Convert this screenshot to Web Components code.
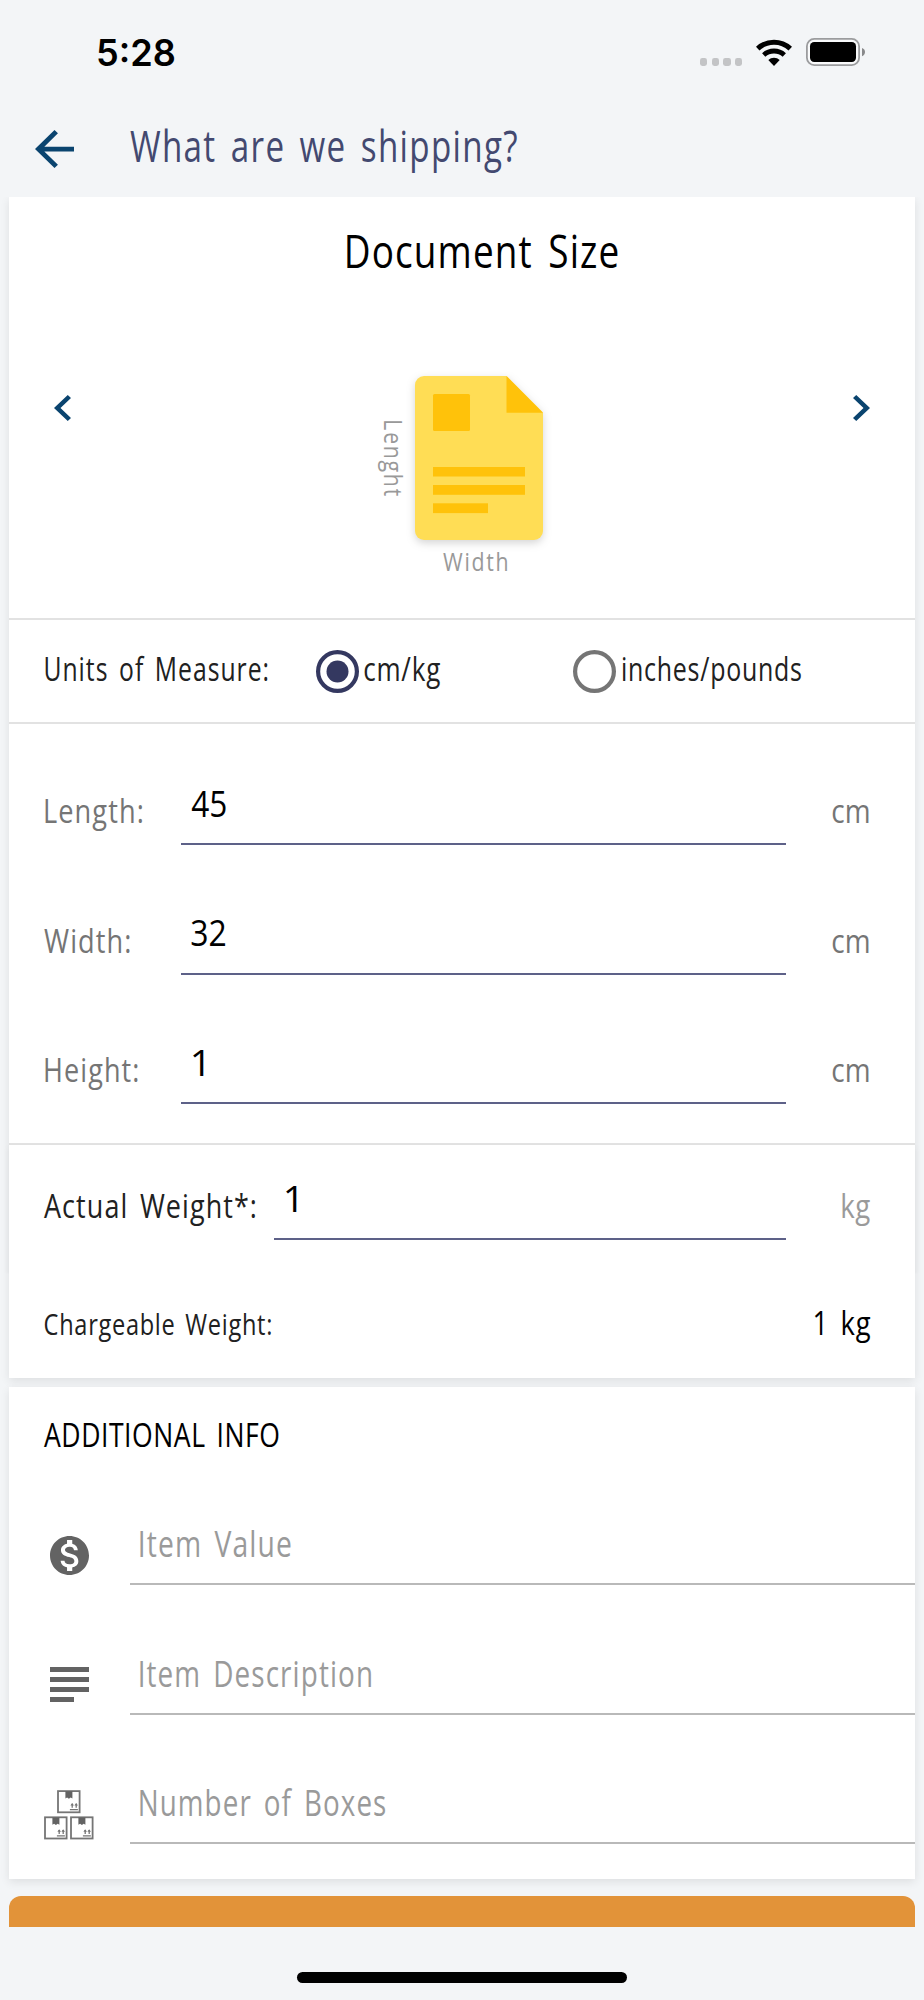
<!DOCTYPE html>
<html lang="en">
<head>
<meta charset="utf-8">
<title>What are we shipping?</title>
<style>
html,body{margin:0;padding:0;background:#f3f5f7}
body{width:924px;height:2000px;overflow:hidden;font-family:"Open Sans","Noto Sans",sans-serif;color:#000}
</style>
</head>
<body>
<shipping-screen></shipping-screen>
<script>
const define = (name, css, html, init) => customElements.define(name, class extends HTMLElement {
  connectedCallback() {
    if (this.shadowRoot) return;
    const root = this.attachShadow({ mode: 'open' });
    const a = n => this.getAttribute(n) || '';
    root.innerHTML = `<style>*{box-sizing:border-box}svg{display:block}${css}</style>` + (typeof html === 'function' ? html(a) : html);
    if (init) init(this, root, a);
  }
});

/* Condensed label: its box spans cap height by inked width. */
const ctx = document.createElement('canvas').getContext('2d');
define('fit-text',
  `:host{display:block;flex:none;height:.714em;line-height:.714em;white-space:pre}
   span{display:block;width:max-content;transform-origin:0 50%}`,
  '<span></span>',
  (el, root, a) => {
    const span = root.querySelector('span'), size = +a('size'), w = +a('w'), text = a('text');
    const face = a('face') || '"Open Sans","Noto Sans",sans-serif', weight = a('weight') || '400';
    const ls = (a('ls') === '' ? 0.03 : +a('ls')) * size, ws = 0.13 * size;
    span.textContent = text;
    el.style.fontSize = size + 'px';
    el.style.width = w + 'px';
    el.style.fontFamily = face;
    el.style.fontWeight = weight;
    if (a('color')) el.style.color = a('color');
    span.style.letterSpacing = ls + 'px';
    span.style.wordSpacing = ws + 'px';
    ctx.font = `${weight} ${size}px ${face}`;
    const m = ctx.measureText(text);
    const ink = m.actualBoundingBoxRight + m.actualBoundingBoxLeft + ls * (text.length - 1) + ws * (text.split(' ').length - 1);
    const s = w / ink;
    span.style.transform = `translate(${m.actualBoundingBoxLeft * s + +a('dx')}px,calc(-.031em + ${+(a('dy') || 1)}px)) scaleX(${s})`;
  });

define('status-bar',
  `:host{display:flex;height:104px;padding:38px 59px 0 97.5px;align-items:flex-start}
   fit-text{margin-top:2px}.dots{display:flex;gap:4.4px;margin:20px 0 0 auto}
   .dots i{width:7.3px;height:7.6px;border-radius:2.4px;background:#c3c4c6}
   .wifi{margin:1px 14px 0 13.8px}`,
  `<fit-text text="5:28" size="36.5" w="76.5" weight="600" ls="0" face="Inter,sans-serif"></fit-text>
   <div class="dots"><i></i><i></i><i></i><i></i></div>
   <svg class="wifi" width="36" height="27" viewBox="0 0 36 27"><g fill="none" stroke="#000"><path stroke-width="5.2" d="M1.7 9.6A24.1 24.1 0 0 1 34.3 9.6"/><path stroke-width="4.9" d="M7.7 16A15.4 15.4 0 0 1 28.3 16"/></g><path d="M12.3 20.9A8.6 8.6 0 0 1 23.7 20.9L18 27Z"/></svg>
   <svg width="59" height="28" viewBox="0 0 59 28"><rect x=".9" y=".9" width="52.2" height="26.2" rx="7.4" fill="#fff" fill-opacity=".5" stroke="#9b9c9e" stroke-width="1.8"/><rect x="4" y="4" width="46" height="20" rx="4.2"/><path fill="#88898b" d="M56 10c4 1.2 4 7 0 8.2z"/></svg>`);

define('nav-bar',
  `:host{display:flex;height:93px;padding:26px 0 0 35px}
   fit-text{margin-left:56px;margin-top:-.5px}`,
  `<svg width="39" height="38" viewBox="4 4 16 16" preserveAspectRatio="none"><path fill="#0a446f" d="M20 11H7.83l5.59-5.59L12 4l-8 8 8 8 1.41-1.41L7.83 13H20v-2z"/></svg>
   <fit-text text="What are we shipping?" size="43.4" w="387" color="#434970" ls=".04"></fit-text>`);

define('ui-card',
  `:host{display:block;margin:0 9px;background:#fff;box-shadow:0 3px 9px rgba(0,0,0,.09)}`, '<slot></slot>');

define('package-picker',
  `:host{display:flex;flex-direction:column;align-items:center;height:423px;padding-top:37px;border-bottom:2px solid #e2e2e2}
   .title{margin-left:40px}
   .row{align-self:stretch;display:flex;padding:110px 45px 0 45px}
   .chev{margin-top:19px}.pic{display:grid;grid-template-columns:18.5px 128px;column-gap:12.5px;margin-left:313px;margin-right:auto}
   .v{width:18.5px;height:75px;margin-top:45px}
   .v fit-text{transform-origin:0 0;transform:translateX(19.4px) rotate(90deg)}
   .doc{overflow:visible;filter:drop-shadow(0 3px 4px rgba(0,0,0,.17))}
   .h{grid-column:2;margin:12px 0 0 27.5px}`,
  `<fit-text class="title" text="Document Size" size="45.5" w="271" ls=".03"></fit-text>
   <div class="row">
    <svg class="chev" width="17" height="26" viewBox="8 6 7.41 12" preserveAspectRatio="none"><path fill="#0a446f" d="M15.41 7.41L14 6l-6 6 6 6 1.41-1.41L10.83 12z"/></svg>
    <div class="pic"><div class="v"><fit-text text="Lenght" size="26" w="75" color="#999" ls=".08"></fit-text></div>
     <svg class="doc" width="128" height="164" viewBox="0 0 128 164"><path fill="#ffdd55" d="M9 0H91.5L128 36.500V155a9 9 0 0 1-9 9H9a9 9 0 0 1-9-9V9a9 9 0 0 1 9-9z"/><g fill="#ffc20a"><path d="M91.500 0 128 36.700H91.500z"/><rect x="18" y="18" width="37" height="37" rx="1.500"/><rect x="18" y="91" width="92" height="9.500"/><rect x="18" y="109" width="92" height="9.800"/><rect x="18" y="127.300" width="55" height="9.800"/></g></svg>
     <fit-text class="h" text="Width" size="26" w="64" color="#999" ls=".08"></fit-text></div>
    <svg class="chev" width="17" height="26" viewBox="8.59 6 7.41 12" preserveAspectRatio="none"><path fill="#0a446f" d="M8.590 16.590L13.170 12 8.590 7.410 10 6l6 6-6 6z"/></svg>
   </div>`);

define('radio-option', `:host{display:flex;align-items:flex-start}fit-text{margin:7.500px 0 0 5.500px}`,
  a => { const on = a('checked') === 'true', c = on ? '#343860' : '#757575';
    return `<svg width="43" height="43" viewBox="0 0 43 43"><circle cx="21.500" cy="21.500" r="19.400" fill="none" stroke="${c}" stroke-width="4.200"/>${on ? `<circle cx="21.500" cy="21.500" r="11" fill="${c}"/>` : ''}</svg>
    <fit-text text="${a('label')}" size="32" w="${a('w')}" dx="${a('dx')}" color="#212121"></fit-text>`; });

define('units-row',
  `:host{display:flex;height:103.500px;padding:30px 0 0 36px;border-bottom:2px solid #e2e2e2}
   fit-text{margin-top:7.500px}.a{margin-left:48px}.b{margin-left:132px}`,
  `<fit-text text="Units of Measure:" size="32" w="223" color="#212121" ls=".04"></fit-text>
   <radio-option class="a" label="cm/kg" w="76" dx="-1" checked="true"></radio-option>
   <radio-option class="b" label="inches/pounds" w="178.500" dx="1.500"></radio-option>`);

define('measure-field',
  `:host{display:grid;grid-template-columns:var(--label,136px) 1fr 84px;height:54.500px;padding-right:45px;align-items:stretch}
   .l,.u{align-self:end;margin-bottom:22px}.u{justify-self:end}
   .v{border-bottom:2.500px solid #5d6188;padding-left:11px}`,
  a => `<fit-text class="l" text="${a('label')}" size="33.500" w="${a('lw')}" dx="${a('ldx')}" color="${a('lc') || '#757575'}" ls=".04"></fit-text>
   <div class="v"><fit-text text="${a('value')}" size="36.500" w="${a('vw')}" dx="${a('vdx')}" dy=".3" ls="0"></fit-text></div>
   <fit-text class="u" text="${a('unit')}" size="33.500" w="${a('uw')}" dx="${a('udx')}" ls=".01" color="${a('uc') || '#757575'}"></fit-text>`);

define('dimension-fields',
  `:host{display:flex;flex-direction:column;gap:75px;height:421px;padding:67px 0 0 36px;border-bottom:2px solid #e2e2e2}`,
  `<measure-field label="Length:" lw="97" ldx=".4" value="45" vw="34.500" vdx="-.8" unit="cm" uw="37" udx="-1"></measure-field>
   <measure-field label="Width:" lw="86" ldx="-1" value="32" vw="34" vdx="-.8" unit="cm" uw="37" udx="-1"></measure-field>
   <measure-field label="Height:" lw="92.500" ldx=".4" value="1" vw="10.500" vdx=".8" unit="cm" uw="37" udx="-1"></measure-field>`);

define('weight-summary',
  `:host{display:block;height:233.500px}
   .a{height:129px;padding:41px 0 0 36px;box-shadow:0 2px 7px rgba(0,0,0,.05);clip-path:inset(0 -9px 0 -9px)}
   measure-field{--label:229px}
   .c{display:flex;justify-content:space-between;align-items:flex-end;height:61px;padding:0 44.500px 0 35.500px}`,
  `<div class="a"><measure-field label="Actual Weight*:" lw="211.500" ldx="-1" lc="#212121" value="1" vw="10.500" vdx=".8" unit="kg" uw="28" uc="#9a9a9a"></measure-field></div>
   <div class="c"><fit-text text="Chargeable Weight:" size="30" w="226.500" dx="-.6" dy=".5" color="#212121"></fit-text><fit-text text="1 kg" size="33.500" w="55.500" dy=".8"></fit-text></div>`);

const boxGlyph = (x, y) => `<g transform="translate(${x} ${y})"><rect x=".8" y=".8" width="21.600" height="21.200" fill="none" stroke="#757575" stroke-width="1.800"/><path fill="#636363" d="M8.200 1h7v7.200l-1.700-1-1.800 1.200-1.800-1.200-1.700 1z"/><path fill="none" stroke="#757575" stroke-width="1.300" d="M12.700 19.300h8M15 17.500v-4M19 17.500v-4"/><path fill="#757575" d="M13.200 15.300l1.800-2.500 1.800 2.500zM17.200 15.300l1.800-2.500 1.800 2.500z"/></g>`;
const icons = {
  money: `<svg width="39" height="39" viewBox="2 2 20 20"><path fill="#636363" d="M12 2C6.480 2 2 6.480 2 12s4.480 10 10 10 10-4.480 10-10S17.520 2 12 2zm1.410 16.090V20h-2.670v-1.930c-1.710-.36-3.160-1.460-3.270-3.400h1.960c.1 1.050.82 1.870 2.650 1.870 1.960 0 2.400-.98 2.400-1.590 0-.83-.44-1.610-2.670-2.140-2.480-.6-4.180-1.620-4.180-3.670 0-1.720 1.390-2.840 3.110-3.210V4h2.670v1.950c1.860.45 2.790 1.860 2.850 3.390H14.300c-.05-1.110-.64-1.870-2.220-1.870-1.500 0-2.400.68-2.400 1.640 0 .84.650 1.390 2.670 1.910s4.180 1.390 4.180 3.910c-.01 1.830-1.380 2.830-3.120 3.160z"/></svg>`,
  lines: `<svg width="39" height="35" viewBox="0 0 39 35" fill="#636363"><path d="M0 0h39v5H0zM0 10h39v5H0zM0 20h39v5H0zM0 30h24v5H0z"/></svg>`,
  boxes: `<svg width="50" height="50" viewBox="0 0 50 50">${boxGlyph(13.200, .3)}${boxGlyph(.2, 26.500)}${boxGlyph(26.200, 26.500)}</svg>`
};

define('info-field',
  `:host{display:grid;grid-template-columns:50px 1fr;column-gap:36px;height:54px;padding-left:35px}
   .i{display:flex;justify-content:center;padding-top:var(--top,4px)}
   .f{border-bottom:2px solid #b9b9b9;padding-left:10.400px}`,
  a => `<div class="i">${icons[a('icon')]}</div><div class="f"><fit-text text="${a('label')}" size="35.800" w="${a('w')}" color="#9a9a9a" ls=".04"></fit-text></div>`);

define('additional-info',
  `:host{display:block;height:492px;padding-top:36px}
   .t{margin-left:35px}.list{display:flex;flex-direction:column;gap:75.500px;margin-top:85px}
   .one{--top:4.500px}.two{--top:6px}.three{--top:-1px}`,
  `<fit-text class="t" text="ADDITIONAL INFO" size="33.500" w="235" ls=".02"></fit-text>
   <div class="list">
    <info-field class="one" icon="money" label="Item Value" w="151"></info-field>
    <info-field class="two" icon="lines" label="Item Description" w="231.500"></info-field>
    <info-field class="three" icon="boxes" label="Number of Boxes" w="245.500"></info-field>
   </div>`);

define('bottom-area',
  `:host{display:flex;flex-direction:column;align-items:center;padding:17px 9px 0}
   .cta{align-self:stretch;height:30.500px;border-radius:12px 12px 0 0;background:#e29339}
   .home{width:330px;height:11px;margin-top:45px;border-radius:6px;background:#000}`,
  `<div class="cta"></div><div class="home"></div>`);

define('shipping-screen',
  `:host{display:flex;flex-direction:column;width:924px;height:2000px;overflow:hidden;background:#f3f5f7}
   .top{height:1181px;clip-path:inset(0 -9px -9px -9px)}.info{margin-top:8.500px;height:492.500px}`,
  `<status-bar></status-bar><nav-bar></nav-bar>
   <ui-card class="top"><package-picker></package-picker><units-row></units-row><dimension-fields></dimension-fields><weight-summary></weight-summary></ui-card>
   <ui-card class="info"><additional-info></additional-info></ui-card>
   <bottom-area></bottom-area>`);
</script>
</body>
</html>
